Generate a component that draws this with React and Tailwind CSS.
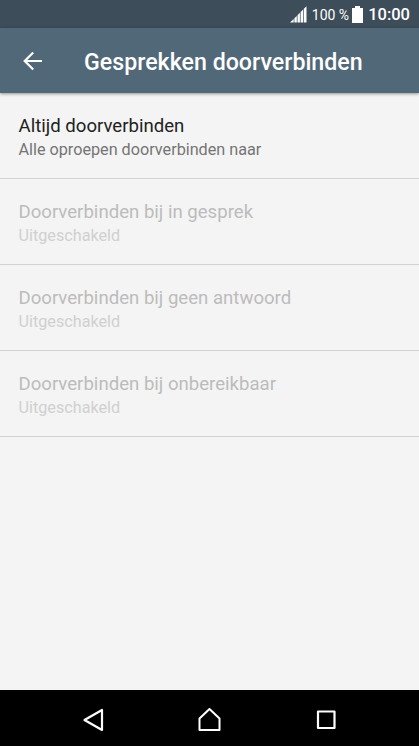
import React from 'react';

const options = [
  { title: 'Altijd doorverbinden', summary: 'Alle oproepen doorverbinden naar', enabled: true },
  { title: 'Doorverbinden bij in gesprek', summary: 'Uitgeschakeld', enabled: false },
  { title: 'Doorverbinden bij geen antwoord', summary: 'Uitgeschakeld', enabled: false },
  { title: 'Doorverbinden bij onbereikbaar', summary: 'Uitgeschakeld', enabled: false },
];

function StatusBar() {
  return (
    <div className="flex h-7 shrink-0 items-center justify-end bg-[#3d4d5a] pr-[9px] text-white">
      <svg width="17" height="17" viewBox="0 0 17 17" fill="currentColor">
        <path d="M0 16.500L3.700 13v3.500zM4.400 12.300l2.400-2.400v6.600H4.400zM7.500 9.200l2.400-2.400v9.700H7.500zM10.600 6.100L13 3.700v12.800h-2.400zM13.700 3L16.500 0.300v16.200h-2.800z" />
      </svg>
      <span className="ml-[5px] pt-[2px] text-[14px] whitespace-nowrap">100 %</span>
      <svg className="ml-[3px]" width="11" height="17" viewBox="0 0 11 17" fill="currentColor">
        <path d="M3 0h5v2h3v15H0V2h3z" />
      </svg>
      <span className="ml-[5px] pt-[2px] text-[16.500px] font-medium">10:00</span>
    </div>
  );
}

function Header() {
  return (
    <header className="flex h-[65px] shrink-0 items-center bg-[#516878] pl-[23px] text-white shadow-[0_1px_3px_rgba(0,0,0,0.4)]">
      <button type="button" aria-label="Terug">
        <svg width="20" height="20" viewBox="0 0 20 20" fill="none" stroke="currentColor" strokeWidth="2.2">
          <path d="M19 10H2M10.200 1.500L1.700 10l8.500 8.500" />
        </svg>
      </button>
      <h1 className="ml-[41px] pt-[4px] text-[23.200px] font-medium whitespace-nowrap">Gesprekken doorverbinden</h1>
    </header>
  );
}

function OptionRow({ title, summary, enabled }) {
  return (
    <li className="flex h-[86px] flex-col justify-center border-b border-[#d2d2d2] pt-[5px] pl-[18.500px]">
      <p className={`text-[18.600px] leading-6 ${enabled ? 'text-[#212121]' : 'text-[#bcbcbc]'}`}>{title}</p>
      <p className={`text-[16.200px] leading-6 ${enabled ? 'text-[#757575]' : 'text-[#d0d0d0]'}`}>{summary}</p>
    </li>
  );
}

function NavigationBar() {
  return (
    <nav className="flex h-14 shrink-0 items-center justify-center gap-[92px] bg-black pt-1 text-white">
      <svg width="24" height="24" viewBox="0 0 24 24" fill="none" stroke="currentColor" strokeWidth="2.200" strokeLinejoin="round">
        <path d="M20 2v20L2.500 12z" />
      </svg>
      <svg width="24" height="24" viewBox="0 0 24 24" fill="none" stroke="currentColor" strokeWidth="2" strokeLinejoin="round">
        <path d="M11.500 1L1.500 10.500V22h20V10.500z" />
      </svg>
      <svg width="24" height="24" viewBox="0 0 24 24" fill="none" stroke="currentColor" strokeWidth="2.200" strokeLinejoin="round">
        <path d="M4 3.500h16.500v16.500H4z" />
      </svg>
    </nav>
  );
}

function App() {
  return (
    <div className="flex h-screen flex-col bg-[#f4f4f4] font-[Roboto,sans-serif]">
      <StatusBar />
      <Header />
      <ul className="flex-1">
        {options.map((option) => (
          <OptionRow key={option.title} {...option} />
        ))}
      </ul>
      <NavigationBar />
    </div>
  );
}

export default App;
